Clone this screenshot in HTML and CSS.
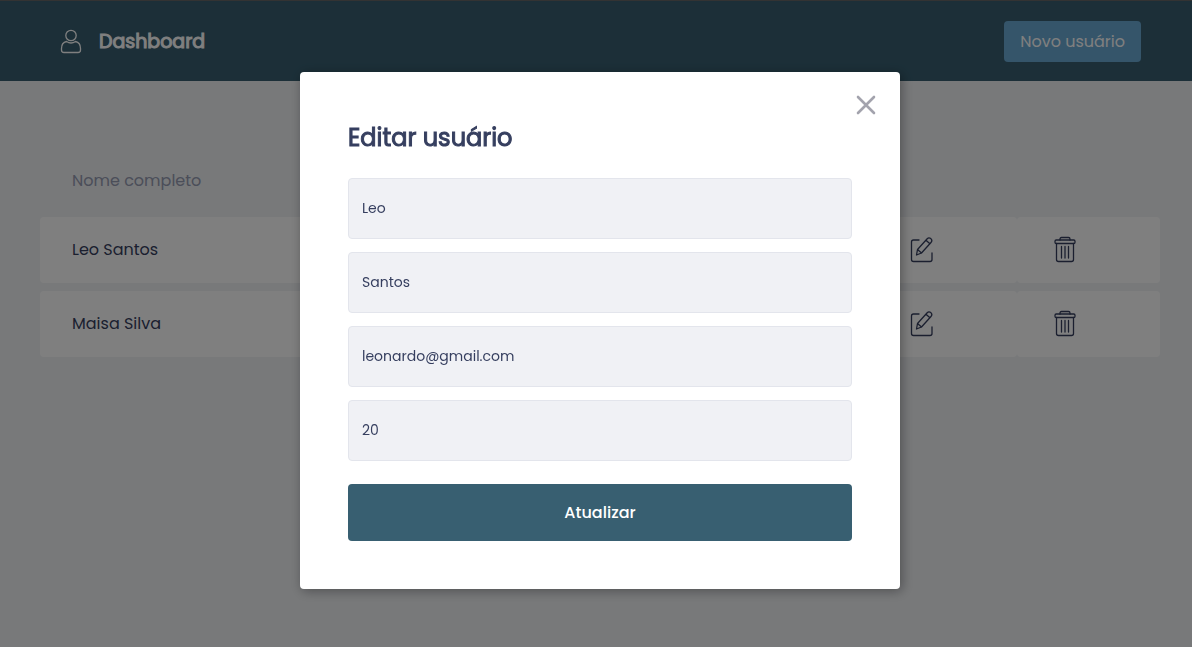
FILE: index.html
```html
<!DOCTYPE html>
<html lang="pt-BR">
<head>
<meta charset="utf-8">
<meta name="viewport" content="width=device-width, initial-scale=1">
<title>Dashboard</title>
<link rel="stylesheet" href="styles.css">
</head>
<body>
<svg class="sprite" aria-hidden="true">
  <symbol id="icon-edit" viewBox="0 -1 32 32">
    <path d="M13 6H7.500Q5.500 6 5.500 8V25.500Q5.500 27.500 7.500 27.500H24Q26 27.500 26 25.500V19"/>
    <path d="M10.500 21 11.500 15.500 21.200 4.800Q22.800 3 24.800 4.600Q26.700 6.400 25.200 8.200L15.500 19ZM11.500 15.500 15.500 19M20 6.200 23.900 9.700"/>
  </symbol>
  <symbol id="icon-trash" viewBox="0 -1 32 32">
    <path d="M11 6V5Q11 3.500 12.500 3.500H19.500Q21 3.500 21 5V6"/>
    <rect x="6" y="6" width="20" height="3.500" rx="1.200"/>
    <path d="M7.500 9.500V25.500Q7.500 27.500 9.500 27.500H22.500Q24.500 27.500 24.500 25.500V9.500M12.500 12.500V24M16 12.500V24M19.500 12.500V24"/>
  </symbol>
</svg>

<header class="topbar">
  <div class="brand">
    <svg class="brand-icon" viewBox="0 0 24 28" aria-hidden="true">
      <circle cx="12" cy="8.500" r="5.200"/>
      <path d="M7.500 14.500Q2.500 15.500 2.500 21.500V23Q2.500 25.500 5 25.500H19Q21.500 25.500 21.500 23V21.500Q21.500 15.500 16.500 14.500Q12 17.500 7.500 14.500Z"/>
    </svg>
    <h1 class="brand-name">Dashboard</h1>
  </div>
  <button class="new-user" type="button">Novo usuário</button>
</header>

<main class="content">
  <table class="users">
    <thead>
      <tr><th scope="col">Nome completo</th><td class="action"></td><td class="action"></td></tr>
    </thead>
    <tbody>
      <tr>
        <td>Leo Santos</td>
        <td class="action"><button class="icon-button" type="button" aria-label="Editar Leo Santos"><svg class="icon"><use href="#icon-edit"/></svg></button></td>
        <td class="action"><button class="icon-button" type="button" aria-label="Excluir Leo Santos"><svg class="icon"><use href="#icon-trash"/></svg></button></td>
      </tr>
      <tr>
        <td>Maisa Silva</td>
        <td class="action"><button class="icon-button" type="button" aria-label="Editar Maisa Silva"><svg class="icon"><use href="#icon-edit"/></svg></button></td>
        <td class="action"><button class="icon-button" type="button" aria-label="Excluir Maisa Silva"><svg class="icon"><use href="#icon-trash"/></svg></button></td>
      </tr>
    </tbody>
  </table>
</main>

<div class="overlay">
  <section class="modal" role="dialog" aria-modal="true" aria-labelledby="modal-title">
    <button class="close" type="button" aria-label="Fechar">
      <svg class="close-icon" viewBox="0 0 24 24"><path d="M4 4 20 20M20 4 4 20"/></svg>
    </button>
    <form class="form">
      <h2 class="form-title" id="modal-title">Editar usuário</h2>
      <div class="fields">
        <input class="field" type="text" aria-label="Nome" value="Leo">
        <input class="field" type="text" aria-label="Sobrenome" value="Santos">
        <input class="field" type="email" aria-label="E-mail" value="leonardo@gmail.com">
        <input class="field" type="text" inputmode="numeric" aria-label="Idade" value="20">
      </div>
      <button class="submit" type="submit">Atualizar</button>
    </form>
  </section>
</div>
</body>
</html>
```
FILE: styles.css
```css
* {
  box-sizing: border-box;
  margin: 0;
  padding: 0;
}

body {
  min-height: 100vh;
  background: #f0f2f5;
  color: #363f5f;
  font-family: Poppins, Inter, "Open Sans", sans-serif;
  font-size: 16px;
}

button,
input {
  font: inherit;
}

button {
  border: 0;
  cursor: pointer;
}

.sprite {
  display: none;
}

.topbar {
  display: flex;
  align-items: center;
  justify-content: space-between;
  height: 81px;
  padding: 0 51px 0 59px;
  border-top: 1px solid #666;
  background: #385f71;
  color: #fff;
}

.brand {
  display: flex;
  align-items: center;
  gap: 16px;
}

.brand-icon {
  width: 24px;
  height: 28px;
  fill: none;
  stroke: currentColor;
  stroke-width: 1.3;
}

.brand-name {
  font-size: 19px;
  font-weight: 400;
  line-height: 31px;
  -webkit-text-stroke: 1px currentColor;
}

.new-user {
  height: 41px;
  padding: 0 16px;
  border-radius: 4px;
  background: #6aaad4;
  color: #fff;
}

.content {
  padding: 64px 32px 0 40px;
}

.users {
  width: 100%;
  border-spacing: 0 8px;
  table-layout: fixed;
}

.users th {
  height: 56px;
  padding: 0 32px 2px;
  color: #969cb3;
  font-weight: 400;
  text-align: left;
}

.users tbody td {
  height: 66px;
  padding: 0 32px 2px;
  border-radius: 4px;
  background: #fff;
}

.users .action {
  width: 143px;
}

.icon-button {
  display: block;
  width: 32px;
  height: 32px;
  background: none;
  color: inherit;
}

.icon {
  display: block;
  width: 32px;
  height: 32px;
  fill: none;
  stroke: #363f5f;
  stroke-width: 1.3;
  stroke-linecap: round;
  stroke-linejoin: round;
}

.overlay {
  position: fixed;
  inset: 0;
  display: flex;
  align-items: flex-start;
  justify-content: center;
  padding: 72px 0 0 8px;
  background: rgba(0, 0, 0, 0.5);
}

.modal {
  position: relative;
  width: 100%;
  max-width: 600px;
  padding: 48px;
  border-radius: 4px;
  background: #fff;
  box-shadow: 2px 2px 12px rgba(0, 0, 0, 0.35);
}

.close {
  position: absolute;
  top: 21px;
  right: 22px;
  width: 24px;
  height: 24px;
  background: none;
}

.close-icon {
  display: block;
  width: 24px;
  height: 24px;
  fill: none;
  stroke: #a3a3ad;
  stroke-width: 2.6;
  stroke-linecap: round;
}

.form-title {
  margin-bottom: 22px;
  font-size: 24px;
  font-weight: 400;
  line-height: 36px;
  -webkit-text-stroke: 1px currentColor;
}

.fields {
  display: grid;
  gap: 13px;
}

.field {
  width: 100%;
  height: 61px;
  padding: 0 13px;
  border: 1px solid #e3e5ec;
  border-radius: 4px;
  background: #f0f1f5;
  color: #363f5f;
  font-size: 14px;
}

.submit {
  width: 100%;
  height: 57px;
  margin-top: 23px;
  border-radius: 4px;
  background: #385f71;
  color: #fff;
  font-weight: 500;
}
```
